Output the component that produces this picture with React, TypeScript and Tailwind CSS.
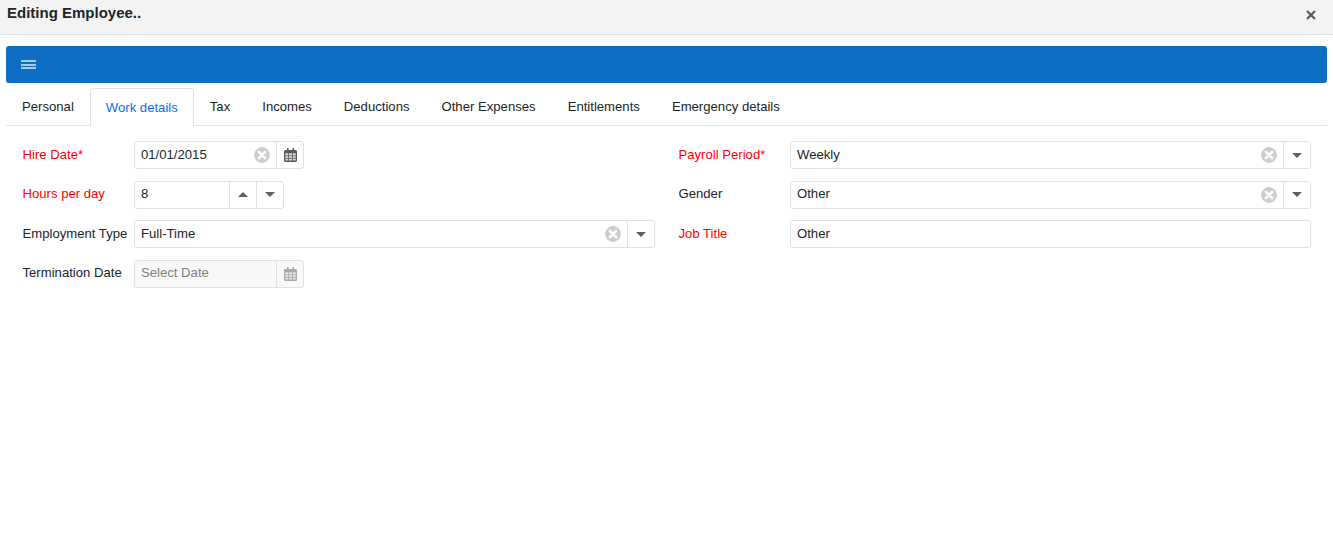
import React from "react";

const Cal = ({ muted }: { muted?: boolean }) => (
  <svg width="13" height="14" viewBox="0 0 13 14" className={muted ? "opacity-50" : ""} fill="#5a5a5a">
    <path d="M3 0h1.500v2H8.500V0H10v2h1.500A1.500 1.500 0 0 1 13 3.500v9a1.500 1.500 0 0 1-1.500 1.500h-10A1.500 1.500 0 0 1 0 12.500v-9A1.500 1.500 0 0 1 1.500 2H3z" />
    <g fill="#fff" opacity="0.75">
      <rect x="1.250" y="5.250" width="3" height="2.250" />
      <rect x="5" y="5.250" width="3" height="2.250" />
      <rect x="8.750" y="5.250" width="3" height="2.250" />
      <rect x="1.250" y="8.250" width="3" height="1.750" />
      <rect x="5" y="8.250" width="3" height="1.750" />
      <rect x="8.750" y="8.250" width="3" height="1.750" />
      <rect x="1.250" y="10.750" width="3" height="1.750" />
      <rect x="5" y="10.750" width="3" height="1.750" />
      <rect x="8.750" y="10.750" width="3" height="1.750" />
    </g>
  </svg>
);

const Clear = () => (
  <svg width="16" height="16" viewBox="0 0 16 16" className="mr-[6px] shrink-0">
    <circle cx="8" cy="8" r="7.900" fill="#cdcdcd" />
    <path d="M5 5l6 6M11 5l-6 6" stroke="#fff" strokeWidth="2.600" strokeLinecap="round" />
  </svg>
);

const Down = () => (
  <svg width="10" height="5" viewBox="0 0 10 5" fill="#606060"><path d="M0 0h10L5 5z" /></svg>
);
const Up = () => (
  <svg width="10" height="5" viewBox="0 0 10 5" fill="#606060"><path d="M0 5h10L5 0z" /></svg>
);

const box = "flex h-7 items-center rounded-[3px] border border-[#dee2e6] text-[#212529]";
const val = "pl-[6px] pb-[0.4px]";

const Select = ({ value }: { value: string }) => (
  <div className={box + " w-full bg-white"}>
    <span className={val + " flex-1"}>{value}</span>
    <Clear />
    <span className="flex h-full w-[27px] items-center justify-center border-l border-[#dee2e6]"><Down /></span>
  </div>
);

const DateBox = ({ value, disabled }: { value: string; disabled?: boolean }) => (
  <div className={box + " w-[170px] " + (disabled ? "bg-[#f8f8f8]" : "bg-white")}>
    <span className={val + " flex-1 " + (disabled ? "text-[#808080]" : "")}>{value}</span>
    {!disabled && <Clear />}
    <span className="flex h-full w-[27px] items-center justify-center border-l border-[#dee2e6]"><Cal muted={disabled} /></span>
  </div>
);

const Label = ({ children, red }: { children: React.ReactNode; red?: boolean }) => (
  <span className={"w-[112px] shrink-0 pb-[0.4px] pl-[0.5px] " + (red ? "text-[#ff0000]" : "text-[#212529]")}>{children}</span>
);

const tabs = ["Personal", "Work details", "Tax", "Incomes", "Deductions", "Other Expenses", "Entitlements", "Emergency details"];

export default function App() {
  return (
    <div className="min-h-[538px] bg-white text-[13.140px] font-['Liberation_Sans',sans-serif]">
      <header className="flex h-[35px] items-start justify-between border-b border-[#e3e3e8] bg-[#f3f3f3] pl-[7px] pr-[17px]">
        <h1 className="pt-[4px] text-[15px] font-bold leading-[18px] text-[#212529]">Editing Employee..</h1>
        <svg width="10" height="10" viewBox="0 0 10 10" className="mt-[10px]">
          <path d="M1 1l8 8M9 1l-8 8" stroke="#5a5a5a" strokeWidth="2.200" />
        </svg>
      </header>

      <div className="mx-[6px] mt-[11px] flex h-[37px] items-center rounded-[3px] bg-[#0d6ec4] pl-[15px]">
        <div className="flex w-[15px] flex-col gap-[1.500px]">
          <span className="h-[2px] bg-[#a9cbea]" />
          <span className="h-[2px] bg-[#a9cbea]" />
          <span className="h-[2px] bg-[#a9cbea]" />
        </div>
      </div>

      <nav className="mx-[6px] mt-[5px] flex h-[38px] border-b border-[#dee2e6]">
        {tabs.map((t) =>
          t === "Work details" ? (
            <span key={t} className="-mb-px flex items-center rounded-t-[4px] border border-b-0 border-[#dee2e6] bg-white px-[15px] text-[#0d6efd]">{t}</span>
          ) : (
            <span key={t} className="flex items-center px-4 text-[#212529]">{t}</span>
          )
        )}
      </nav>

      <main className="mx-[22px] mt-[15px] grid grid-cols-2 gap-x-[23px] gap-y-[11.500px]">
        <div className="flex items-center">
          <Label red>Hire Date*</Label>
          <DateBox value="01/01/2015" />
        </div>
        <div className="flex items-center">
          <Label red>Payroll Period*</Label>
          <Select value="Weekly" />
        </div>

        <div className="flex items-center">
          <Label red>Hours per day</Label>
          <div className={box + " w-[150px] bg-white"}>
            <span className={val + " flex-1"}>8</span>
            <span className="flex h-full w-[27px] items-center justify-center border-l border-[#dee2e6]"><Up /></span>
            <span className="flex h-full w-[27px] items-center justify-center border-l border-[#dee2e6]"><Down /></span>
          </div>
        </div>
        <div className="flex items-center">
          <Label>Gender</Label>
          <Select value="Other" />
        </div>

        <div className="flex items-center">
          <Label>Employment Type</Label>
          <Select value="Full-Time" />
        </div>
        <div className="flex items-center">
          <Label red>Job Title</Label>
          <div className={box + " w-full bg-white"}><span className={val}>Other</span></div>
        </div>

        <div className="flex items-center">
          <Label>Termination Date</Label>
          <DateBox value="Select Date" disabled />
        </div>
      </main>
    </div>
  );
}
